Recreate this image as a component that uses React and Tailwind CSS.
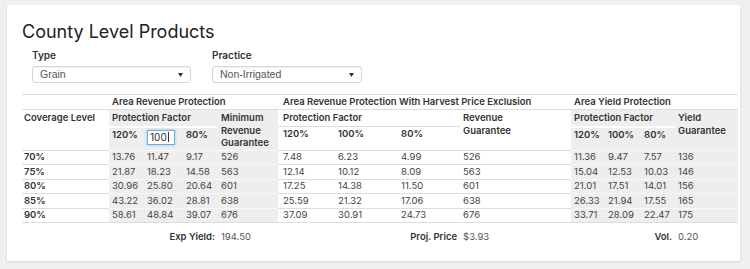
import React from 'react'

const rows = [
  ['70%', '13.76', '11.47', '9.17', '526', '7.48', '6.23', '4.99', '526', '11.36', '9.47', '7.57', '136'],
  ['75%', '21.87', '18.23', '14.58', '563', '12.14', '10.12', '8.09', '563', '15.04', '12.53', '10.03', '146'],
  ['80%', '30.96', '25.80', '20.64', '601', '17.25', '14.38', '11.50', '601', '21.01', '17.51', '14.01', '156'],
  ['85%', '43.22', '36.02', '28.81', '638', '25.59', '21.32', '17.06', '638', '26.33', '21.94', '17.55', '165'],
  ['90%', '58.61', '48.84', '39.07', '676', '37.09', '30.91', '24.73', '676', '33.71', '28.09', '22.47', '175'],
]

// column widths in px, left edge of table at x=22
const colWidths = [87, 35, 39, 35, 60, 57, 63, 62, 111, 34, 36, 34, 63]
const shaded = [false, true, true, true, true, false, false, false, false, true, true, true, true]
const padLeft = ['pl-[2px]', 'pl-[3px]', 'pl-[3px]', 'pl-[3px]', 'pl-[3px]', 'pl-[5px]', 'pl-[3px]', 'pl-[3px]', 'pl-[3px]', 'pl-[3px]', 'pl-[3px]', 'pl-[3px]', 'pl-[3px]']

const font = "font-['Inter','DejaVu_Sans',sans-serif]"

function Select({ value, width }) {
  return (
    <div
      className={`${width} h-[17px] flex items-center justify-between pl-[7px] pr-[7px] border border-[#d6d6d6] rounded-[3px] bg-white shadow-[inset_0_1px_1px_rgba(0,0,0,0.06)]`}
    >
      <span className="font-['Liberation_Sans',Arial,sans-serif] text-[10.5px] text-[#555]">{value}</span>
      <svg width="5" height="4" viewBox="0 0 5 4">
        <path d="M0 0 L5 0 L2.5 4 Z" fill="#333" />
      </svg>
    </div>
  )
}

export default function App() {
  return (
    <div className={`h-[269px] bg-[#f0f0f0] pt-[5px] pl-[7px] ${font}`}>
      <div className="w-[733px] h-[256px] bg-white shadow-[0_1px_2px_rgba(0,0,0,0.12)] pl-[15px] pt-[17px]">
        {/* Title */}
        <h1 className="text-[18px] leading-[20px] text-[#222] font-normal">County Level Products</h1>

        {/* Filters */}
        <div className="flex gap-[21px] pl-[10px] mt-[7px]">
          <div>
            <div className="text-[10px] leading-[12px] font-semibold text-[#333] mb-[5px]">Type</div>
            <Select value="Grain" width="w-[159px]" />
          </div>
          <div>
            <div className="text-[10px] leading-[12px] font-semibold text-[#333] mb-[5px]">Practice</div>
            <Select value="Non-Irrigated" width="w-[150px]" />
          </div>
        </div>

        {/* Table */}
        <table className="mt-[11px] table-fixed border-collapse w-[716px] text-[9.5px] leading-[12.5px] text-[#333]">
          <colgroup>
            {colWidths.map((w, i) => (
              <col key={i} style={{ width: w }} />
            ))}
          </colgroup>
          <thead className="font-semibold">
            <tr className="h-[15px] border-t border-[#dddddd]">
              <th className="p-0"></th>
              <th colSpan={4} className="text-left align-top pl-[3px] pt-[1px] font-semibold">Area Revenue Protection</th>
              <th colSpan={4} className="text-left align-top pl-[5px] pt-[1px] font-semibold">Area Revenue Protection With Harvest Price Exclusion</th>
              <th colSpan={4} className="text-left align-top pl-[3px] pt-[1px] font-semibold">Area Yield Protection</th>
            </tr>
            <tr className="h-[17px] border-t border-[#dddddd]">
              <th rowSpan={2} className="text-left align-top pl-[2px] pt-[2px] font-semibold">Coverage Level</th>
              <th colSpan={3} className="text-left align-top pl-[3px] pt-[2px] bg-[#eeeeee] border-b-2 border-white font-semibold">Protection Factor</th>
              <th rowSpan={2} className="text-left align-top pl-[3px] pt-[2px] bg-[#eeeeee] font-semibold">Minimum Revenue Guarantee</th>
              <th colSpan={3} className="text-left align-top pl-[5px] pt-[2px] border-b border-[#dddddd] font-semibold">Protection Factor</th>
              <th rowSpan={2} className="text-left align-top pl-[3px] pt-[2px] font-semibold">Revenue<br />Guarantee</th>
              <th colSpan={3} className="text-left align-top pl-[3px] pt-[2px] bg-[#eeeeee] border-b-2 border-white font-semibold">Protection Factor</th>
              <th rowSpan={2} className="text-left align-top pl-[3px] pt-[2px] bg-[#eeeeee] font-semibold">Yield<br />Guarantee</th>
            </tr>
            <tr className="h-[23px]">
              <th className="text-left align-top pl-[3px] pt-[1px] bg-[#eeeeee] font-semibold">120%</th>
              <th className="text-left align-top pl-[3px] pt-[2px] bg-[#eeeeee] font-normal">
                <div className="w-[28px] h-[15px] bg-white border border-[#66afe9] shadow-[0_0_3px_rgba(102,175,233,0.6)] flex items-center pl-[2px] text-[10px] text-[#333]">
                  100<span className="inline-block w-px h-[10px] bg-[#333] ml-px"></span>
                </div>
              </th>
              <th className="text-left align-top pl-[3px] pt-[1px] bg-[#eeeeee] font-semibold">80%</th>
              <th className="text-left align-top pl-[5px] pt-[1px] font-semibold">120%</th>
              <th className="text-left align-top pl-[3px] pt-[1px] font-semibold">100%</th>
              <th className="text-left align-top pl-[3px] pt-[1px] font-semibold">80%</th>
              <th className="text-left align-top pl-[3px] pt-[1px] bg-[#eeeeee] font-semibold">120%</th>
              <th className="text-left align-top pl-[3px] pt-[1px] bg-[#eeeeee] font-semibold">100%</th>
              <th className="text-left align-top pl-[3px] pt-[1px] bg-[#eeeeee] font-semibold">80%</th>
            </tr>
          </thead>
          <tbody>
            {rows.map((row) => (
              <tr key={row[0]} className="h-[14.6px]">
                {row.map((cell, i) => (
                  <td
                    key={i}
                    className={`p-0 ${padLeft[i]} align-middle border-t ${
                      shaded[i] ? 'bg-[#eeeeee] border-[#f8f8f8]' : 'border-[#dddddd]'
                    } ${i === 0 ? 'font-semibold text-[#333]' : 'text-[#444]'}`}
                  >
                    {cell}
                  </td>
                ))}
              </tr>
            ))}
          </tbody>
          <tfoot>
            <tr className="border-t border-[#dddddd]">
              <td colSpan={4} className="text-right pr-[3px] pt-[8px] font-semibold text-[#333]">Exp Yield:</td>
              <td className="pl-[3px] pt-[8px] text-[#555]">194.50</td>
              <td colSpan={3} className="text-right pr-[3px] pt-[8px] font-semibold text-[#333]">Proj. Price</td>
              <td className="pl-[3px] pt-[8px] text-[#555]">$3.93</td>
              <td colSpan={3} className="text-right pr-[3px] pt-[8px] font-semibold text-[#333]">Vol.</td>
              <td className="pl-[3px] pt-[8px] text-[#555]">0.20</td>
            </tr>
          </tfoot>
        </table>
      </div>
    </div>
  )
}
